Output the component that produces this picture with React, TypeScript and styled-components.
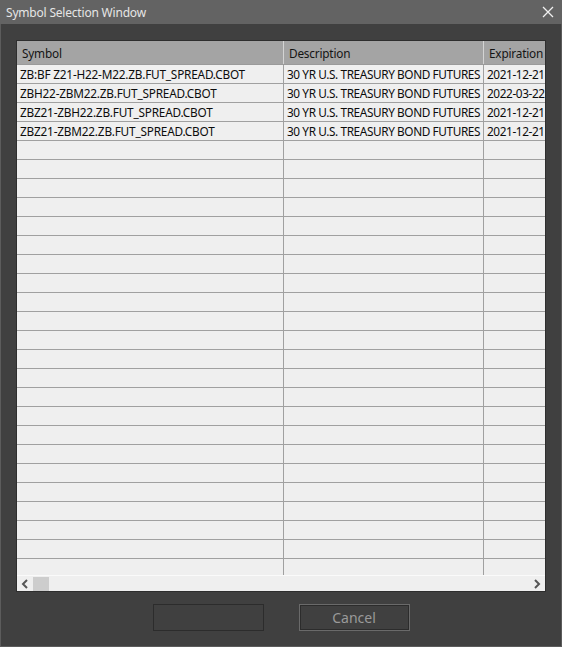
import styled, { createGlobalStyle } from 'styled-components';

const Global = createGlobalStyle`
  html, body {
    margin: 0;
    padding: 0;
    background: #404040;
  }
  * { box-sizing: border-box; }
`;

const rows = [
  { symbol: 'ZB:BF Z21-H22-M22.ZB.FUT_SPREAD.CBOT', desc: '30 YR U.S. TREASURY BOND FUTURES', exp: '2021-12-21' },
  { symbol: 'ZBH22-ZBM22.ZB.FUT_SPREAD.CBOT', desc: '30 YR U.S. TREASURY BOND FUTURES', exp: '2022-03-22' },
  { symbol: 'ZBZ21-ZBH22.ZB.FUT_SPREAD.CBOT', desc: '30 YR U.S. TREASURY BOND FUTURES', exp: '2021-12-21' },
  { symbol: 'ZBZ21-ZBM22.ZB.FUT_SPREAD.CBOT', desc: '30 YR U.S. TREASURY BOND FUTURES', exp: '2021-12-21' },
];

const EMPTY_ROWS = 23;
const COLS = '267px 200px 61px';

const Window = styled.div`
  width: 562px;
  height: 647px;
  display: flex;
  flex-direction: column;
  background: #404040;
  border: 1px solid #5c5c5c;
  border-top: none;
  font-family: 'Noto Sans', 'Open Sans', sans-serif;
`;

const TitleBar = styled.div`
  height: 24px;
  margin: 0 -1px;
  display: flex;
  align-items: center;
  justify-content: space-between;
  padding: 0 8px 0 6px;
  background: #636363;
  color: #e6e6e6;
  font-size: 12px;
  letter-spacing: -0.2px;
`;

const CloseIcon = () => (
  <svg width="12" height="12" viewBox="0 0 12 12">
    <path d="M1 1 L11 11 M11 1 L1 11" stroke="#f0f0f0" strokeWidth="1.3" fill="none" />
  </svg>
);

const Body = styled.div`
  flex: 1;
  display: flex;
  flex-direction: column;
  padding: 16px 15px 15px 15px;
`;

const Table = styled.div`
  height: 552px;
  display: flex;
  flex-direction: column;
  border: 1px solid #2e2e2e;
  background: #efefef;
  overflow: hidden;
`;

const Viewport = styled.div`
  flex: 1;
  overflow: hidden;
`;

const HeaderRow = styled.div`
  display: grid;
  grid-template-columns: ${COLS};
  height: 24px;
  background: #a4a4a4;
  border-bottom: 1px solid #9a9a9a;
`;

const HeaderCell = styled.div`
  display: flex;
  align-items: center;
  padding-left: 5px;
  font-size: 11.8px;
  letter-spacing: -0.2px;
  color: #141414;
  white-space: nowrap;
  overflow: hidden;
  border-right: 1px solid #d4d4d4;
  &:last-child { border-right: none; }
`;

const Row = styled.div`
  display: grid;
  grid-template-columns: ${COLS};
  height: 19px;
  border-bottom: 1px solid #a0a0a0;
`;

const Cell = styled.div<{ $tight?: boolean }>`
  display: flex;
  align-items: center;
  padding-left: 3px;
  font-size: 11.8px;
  letter-spacing: ${({ $tight }) => ($tight ? '-0.4px' : '-0.2px')};
  color: #0c0c0c;
  white-space: nowrap;
  overflow: hidden;
  border-right: 1px solid #a0a0a0;
  &:last-child { border-right: none; }
`;

const ScrollBar = styled.div`
  height: 16px;
  flex-shrink: 0;
  display: flex;
  align-items: center;
  background: #efefef;
  border-top: 1px solid #fafafa;
  padding: 0 4px;
`;

const Thumb = styled.div`
  width: 16px;
  height: 14px;
  margin-left: 4px;
  background: #cdcdcd;
`;

const Track = styled.div`
  flex: 1;
`;

const Arrow = ({ dir }: { dir: 'left' | 'right' }) => (
  <svg width="8" height="10" viewBox="0 0 8 10">
    <path
      d={dir === 'left' ? 'M6 1 L2 5 L6 9' : 'M2 1 L6 5 L2 9'}
      stroke="#555"
      strokeWidth="2"
      fill="none"
    />
  </svg>
);

const Buttons = styled.div`
  display: flex;
  justify-content: center;
  gap: 35px;
  padding-top: 12px;
`;

const Button = styled.button<{ $focused?: boolean }>`
  width: 111px;
  height: 27px;
  background: #404040;
  border: 1px solid ${({ $focused }) => ($focused ? '#6a6a6a' : '#2c2c2c')};
  box-shadow: ${({ $focused }) => ($focused ? 'inset 0 0 0 1px #2c2c2c' : 'none')};
  color: #9a9a9a;
  font-family: 'Noto Sans', 'Open Sans', sans-serif;
  font-size: 14px;
  padding: 0;
`;

export default function App() {
  return (
    <>
      <Global />
      <Window>
        <TitleBar>
          <span>Symbol Selection Window</span>
          <CloseIcon />
        </TitleBar>
        <Body>
          <Table>
            <Viewport>
              <HeaderRow>
                <HeaderCell>Symbol</HeaderCell>
                <HeaderCell>Description</HeaderCell>
                <HeaderCell>Expiration</HeaderCell>
              </HeaderRow>
              {rows.map((r, i) => (
                <Row key={i}>
                  <Cell>{r.symbol}</Cell>
                  <Cell $tight>{r.desc}</Cell>
                  <Cell $tight>{r.exp}</Cell>
                </Row>
              ))}
              {Array.from({ length: EMPTY_ROWS }).map((_, i) => (
                <Row key={`e${i}`}>
                  <Cell />
                  <Cell />
                  <Cell />
                </Row>
              ))}
            </Viewport>
            <ScrollBar>
              <Arrow dir="left" />
              <Thumb />
              <Track />
              <Arrow dir="right" />
            </ScrollBar>
          </Table>
          <Buttons>
            <Button />
            <Button $focused>Cancel</Button>
          </Buttons>
        </Body>
      </Window>
    </>
  );
}
